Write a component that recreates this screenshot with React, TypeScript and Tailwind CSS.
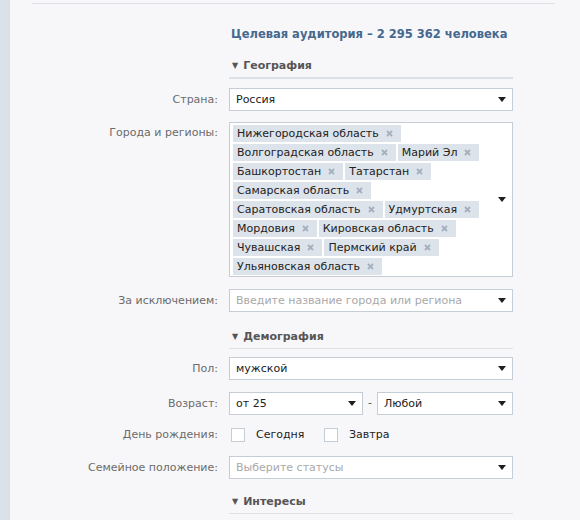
import React from 'react';

const font = { fontFamily: '"DejaVu Sans", Tahoma, sans-serif' };

const Arrow = () => (
  <svg width="8" height="5" viewBox="0 0 8 5" className="shrink-0">
    <path d="M0 0h8L4 5z" fill="#1f1f1f" />
  </svg>
);

const Cross = () => (
  <svg width="7" height="7" viewBox="0 0 7 7" className="shrink-0">
    <path d="M1 1l5 5M6 1L1 6" stroke="#a3b0bf" strokeWidth="1.8" />
  </svg>
);

interface SelectProps {
  value: string;
  placeholder?: boolean;
  className?: string;
}

const Select: React.FC<SelectProps> = ({ value, placeholder = false, className = 'w-[284px]' }) => (
  <div className={`h-[23px] border border-[#c5cdd6] bg-white flex items-center justify-between pl-[6px] pr-[6px] ${className}`}>
    <span className={`text-[11px] leading-[14px] truncate ${placeholder ? 'text-[#a9a9a9]' : 'text-[#222]'}`}>{value}</span>
    <Arrow />
  </div>
);

const Row: React.FC<{ label: string; top?: boolean; children: React.ReactNode }> = ({ label, top = false, children }) => (
  <div className={`flex ${top ? 'items-start' : 'items-center'}`}>
    <div className={`w-[209px] shrink-0 text-right text-[11px] leading-[16px] text-[#6b6b6b] pr-[1px] ${top ? 'pt-[3px]' : ''}`}>{label}</div>
    <div className="ml-[10px]">{children}</div>
  </div>
);

const Section: React.FC<{ title: string; thick?: boolean }> = ({ title, thick = false }) => (
  <div className="ml-[219px] w-[284px]">
    <div className={`flex items-center gap-[5px] pl-[3px] pb-[3px] ${thick ? 'border-b-2 border-[#dce1e7]' : 'border-b border-[#dde1e6]'}`}>
      <span className="text-[8px] leading-[16px] text-[#555]">▼</span>
      <span className="text-[11px] leading-[16px] font-bold text-[#555]">{title}</span>
    </div>
  </div>
);

const Tag: React.FC<{ name: string }> = ({ name }) => (
  <span className="h-[17px] bg-[#dde3ea] flex items-center pl-[4px] pr-[8px] gap-[7px] text-[11px] leading-[14px] text-[#222]">
    {name}
    <Cross />
  </span>
);

const regionRows = [
  ['Нижегородская область'],
  ['Волгоградская область', 'Марий Эл'],
  ['Башкортостан', 'Татарстан'],
  ['Самарская область'],
  ['Саратовская область', 'Удмуртская'],
  ['Мордовия', 'Кировская область'],
  ['Чувашская', 'Пермский край'],
  ['Ульяновская область'],
];

const Checkbox: React.FC<{ label: string; className?: string }> = ({ label, className = '' }) => (
  <label className={`flex items-center ${className}`}>
    <span className="w-[14px] h-[14px] border border-[#c5cdd6] bg-white shrink-0" />
    <span className="ml-[11px] text-[11px] leading-[16px] text-[#222]">{label}</span>
  </label>
);

export default function App() {
  return (
    <div className="w-[580px] h-[520px] flex bg-[#f7f7fa] overflow-hidden" style={font}>
      <div className="w-[10px] shrink-0 bg-[#dae1e8]" />
      <div className="flex-1 flex flex-col">
        <div className="mt-[3px] ml-[22px] w-[523px] h-px bg-[#dfe2e8]" />

        <div className="ml-[221px] mt-[22px] text-[11.5px] leading-[16px] font-bold text-[#45688e]">
          Целевая аудитория – 2 295 362 человека
        </div>

        <div className="mt-[16px]">
          <Section title="География" thick />
        </div>

        <div className="mt-[9px]">
          <Row label="Страна:">
            <Select value="Россия" />
          </Row>
        </div>

        <div className="mt-[11px]">
          <Row label="Города и регионы:" top>
            <div className="w-[284px] h-[155px] border border-[#c5cdd6] bg-white flex items-center pl-[3px] pr-[6px]">
              <div className="flex-1 flex flex-col gap-[2px] self-start pt-[2px]">
                {regionRows.map((row, i) => (
                  <div key={i} className="flex gap-[2px]">
                    {row.map((r) => (
                      <Tag key={r} name={r} />
                    ))}
                  </div>
                ))}
              </div>
              <Arrow />
            </div>
          </Row>
        </div>

        <div className="mt-[12px]">
          <Row label="За исключением:">
            <Select value="Введите название города или региона" placeholder />
          </Row>
        </div>

        <div className="mt-[17px]">
          <Section title="Демография" />
        </div>

        <div className="mt-[8px]">
          <Row label="Пол:">
            <Select value="мужской" />
          </Row>
        </div>

        <div className="mt-[12px]">
          <Row label="Возраст:">
            <div className="flex items-center w-[284px]">
              <Select value="от 25" className="w-[134px]" />
              <span className="w-[14px] text-center text-[11px] text-[#555]">-</span>
              <Select value="Любой" className="w-[136px]" />
            </div>
          </Row>
        </div>

        <div className="mt-[12px]">
          <Row label="День рождения:">
            <div className="flex items-center pl-[2px]">
              <Checkbox label="Сегодня" className="w-[93px]" />
              <Checkbox label="Завтра" />
            </div>
          </Row>
        </div>

        <div className="mt-[13px]">
          <Row label="Семейное положение:">
            <Select value="Выберите статусы" placeholder />
          </Row>
        </div>

        <div className="mt-[15px]">
          <Section title="Интересы" />
        </div>
      </div>
    </div>
  );
}
